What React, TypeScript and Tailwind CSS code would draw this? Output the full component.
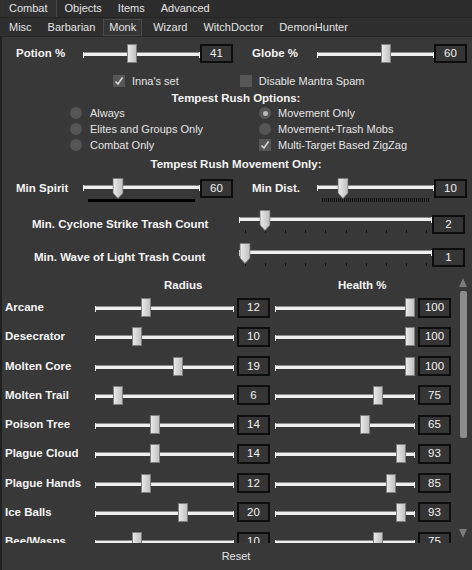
import React from 'react';

type Ticks = 'none' | 'solid' | 'dotted' | 'ten';

type SliderProps = {
  w: string;
  f: number;
  pointer?: boolean;
  ticks?: Ticks;
  inset?: number;
};

const Thumb = ({ pointer }: { pointer?: boolean }) =>
  pointer ? (
    <svg width="11" height="21" viewBox="0 0 11 21" className="block">
      <defs>
        <linearGradient id="pt" x1="0" x2="1" y1="0" y2="0">
          <stop offset="0" stopColor="#ececec" />
          <stop offset="1" stopColor="#bdbdbd" />
        </linearGradient>
      </defs>
      <path d="M0.5 0.5 H10.5 V15 L5.5 20.5 L0.5 15 Z" fill="url(#pt)" stroke="#7d7d7d" />
    </svg>
  ) : (
    <div className="w-[10px] h-[19px] bg-gradient-to-r from-[#e8e8e8] to-[#c2c2c2] border border-[#7e7e7e]" />
  );

const Slider = ({ w, f, pointer, ticks = 'none', inset = 5 }: SliderProps) => (
  <div className={`relative shrink-0 ${w} ${pointer ? 'h-[21px]' : 'h-[19px]'}`}>
    <div
      className={`absolute left-0 right-0 h-[4px] border-t border-[#8a8a8a] bg-[#efefef] ${
        pointer ? 'top-[7px]' : 'top-[8px]'
      }`}
    />
    <div className={`absolute left-0 w-px h-[6px] bg-[#efefef] ${pointer ? 'top-[7px]' : 'top-[8px]'}`} />
    <div className={`absolute right-0 w-px h-[6px] bg-[#efefef] ${pointer ? 'top-[7px]' : 'top-[8px]'}`} />
    {ticks === 'solid' && <div className="absolute left-[5px] right-[5px] top-[21px] h-[3px] bg-black" />}
    {ticks === 'dotted' && (
      <div className="absolute left-[5px] right-[5px] top-[20px] h-[4px] bg-[repeating-linear-gradient(90deg,#111_0px,#111_1px,transparent_1px,transparent_2px)]" />
    )}
    {ticks === 'ten' &&
      Array.from({ length: 10 }).map((_, i) => (
        <div
          key={i}
          className="absolute top-[20px] w-px h-[3px] bg-[#111]"
          style={{ left: `calc(${inset}px + (100% - ${inset * 2}px) * ${i / 9})` }}
        />
      ))}
    <div
      className="absolute top-0 -translate-x-1/2"
      style={{ left: `calc(${inset}px + (100% - ${inset * 2}px) * ${f})` }}
    >
      <Thumb pointer={pointer} />
    </div>
  </div>
);

const ValueBox = ({ v, tall }: { v: number; tall?: boolean }) => (
  <div
    className={`shrink-0 w-[33px] ${tall ? 'h-[20px]' : 'h-[19px]'} border-2 border-[#0d0d0d] bg-[#353535] flex items-center justify-center text-[11.5px] text-[#f2f2f2]`}
  >
    {v}
  </div>
);

const Check = ({ on }: { on?: boolean }) => (
  <div className="w-[12px] h-[12px] bg-[#565656] flex items-center justify-center shrink-0">
    {on && (
      <svg width="10" height="10" viewBox="0 0 10 10">
        <path d="M1.5 5.5 L4 8 L8.5 1.5" fill="none" stroke="#d6d6d6" strokeWidth="1.6" />
      </svg>
    )}
  </div>
);

const Radio = ({ on }: { on?: boolean }) => (
  <div className="w-[12px] h-[12px] rounded-full bg-[#555555] flex items-center justify-center shrink-0">
    {on && <div className="w-[5px] h-[5px] rounded-full bg-[#b9b9b9]" />}
  </div>
);

const rows = [
  { name: 'Arcane', r: 12, h: 100 },
  { name: 'Desecrator', r: 10, h: 100 },
  { name: 'Molten Core', r: 19, h: 100 },
  { name: 'Molten Trail', r: 6, h: 75 },
  { name: 'Poison Tree', r: 14, h: 65 },
  { name: 'Plague Cloud', r: 14, h: 93 },
  { name: 'Plague Hands', r: 12, h: 85 },
  { name: 'Ice Balls', r: 20, h: 93 },
  { name: 'Bee/Wasps', r: 10, h: 75 },
];

const bold = 'font-bold text-[11.5px] text-[#f4f4f4]';

export default function App() {
  return (
    <div className="w-[472px] h-[570px] overflow-hidden bg-[#383838] font-['Liberation_Sans',Arial,sans-serif] text-[11px] text-[#e4e4e4] flex flex-col">
      {/* main tabs */}
      <div className="h-[17px] bg-[#2c2c2c] flex items-stretch pl-px shrink-0">
        <div className="px-[8px] flex items-center border-r border-[#454545] bg-[#303030]">Combat</div>
        <div className="px-[8px] flex items-center">Objects</div>
        <div className="px-[8px] flex items-center">Items</div>
        <div className="px-[8px] flex items-center">Advanced</div>
      </div>
      {/* class tabs */}
      <div className="h-[20px] bg-[#2e2e2e] border-t border-[#242424] border-b border-b-[#262626] flex items-center pl-[1px] shrink-0">
        <div className="px-[8px]">Misc</div>
        <div className="px-[8px]">Barbarian</div>
        <div className="px-[5px] h-[17px] flex items-center border border-[#4a4a4a] bg-[#353535]">Monk</div>
        <div className="px-[8px] ml-[3px]">Wizard</div>
        <div className="px-[8px]">WitchDoctor</div>
        <div className="px-[8px]">DemonHunter</div>
      </div>

      <div className="flex-1 flex flex-col border-l-2 border-[#202020]">
        {/* potion / globe */}
        <div className="mt-[7px] h-[19px] flex items-center pl-[14px]">
          <div className={`${bold} w-[67px]`}>Potion %</div>
          <Slider w="w-[117px]" f={0.41} />
          <ValueBox v={41} />
          <div className={`${bold} w-[65px] ml-[19px]`}>Globe %</div>
          <Slider w="w-[117px]" f={0.6} />
          <ValueBox v={60} />
        </div>

        <div className="mt-[12px] h-[12px] flex items-center">
          <div className="ml-[111px] flex items-center gap-[7px]">
            <Check on />
            <span>Inna's set</span>
          </div>
          <div className="ml-[61px] flex items-center gap-[7px]">
            <Check />
            <span>Disable Mantra Spam</span>
          </div>
        </div>

        <div className={`mt-[6px] h-[12px] flex items-center justify-center pr-[2px] ${bold}`}>Tempest Rush Options:</div>

        <div className="flex">
          <div className="ml-[68px] w-[189px] flex flex-col">
            <div className="h-[16px] flex items-center gap-[8px]"><Radio /><span>Always</span></div>
            <div className="h-[16px] flex items-center gap-[8px]"><Radio /><span>Elites and Groups Only</span></div>
            <div className="h-[16px] flex items-center gap-[8px]"><Radio /><span>Combat Only</span></div>
          </div>
          <div className="flex flex-col">
            <div className="h-[16px] flex items-center gap-[7px]"><Radio on /><span>Movement Only</span></div>
            <div className="h-[16px] flex items-center gap-[7px]"><Radio /><span>Movement+Trash Mobs</span></div>
            <div className="h-[16px] flex items-center gap-[7px]"><Check on /><span>Multi-Target Based ZigZag</span></div>
          </div>
        </div>

        <div className={`mt-[6px] h-[12px] flex items-center justify-center pr-[2px] ${bold}`}>Tempest Rush Movement Only:</div>

        {/* min spirit / min dist */}
        <div className="mt-[8px] h-[19px] flex items-start pl-[14px]">
          <div className={`${bold} w-[67px] h-[19px] flex items-center`}>Min Spirit</div>
          <div className="-mt-px">
            <Slider w="w-[117px]" f={0.28} pointer ticks="solid" />
          </div>
          <ValueBox v={60} />
          <div className={`${bold} w-[65px] ml-[19px] h-[19px] flex items-center`}>Min Dist.</div>
          <div className="-mt-px">
            <Slider w="w-[117px]" f={0.2} pointer ticks="dotted" />
          </div>
          <ValueBox v={10} />
        </div>

        <div className="mt-[17px] h-[19px] flex items-start">
          <div className={`${bold} w-[237px] pl-[30px] h-[19px] flex items-center`}>Min. Cyclone Strike Trash Count</div>
          <div className="-mt-[5px]">
            <Slider w="w-[193px]" f={1 / 9} pointer ticks="ten" inset={6} />
          </div>
          <ValueBox v={2} />
        </div>

        <div className="mt-[14px] h-[19px] flex items-start">
          <div className={`${bold} w-[237px] pl-[32px] h-[19px] flex items-center`}>Min. Wave of Light Trash Count</div>
          <div className="-mt-[5px]">
            <Slider w="w-[193px]" f={0} pointer ticks="ten" inset={6} />
          </div>
          <ValueBox v={1} />
        </div>

        {/* scroll area */}
        <div className="mt-[5px] h-[271px] flex overflow-hidden">
          <div className="w-[456px] flex flex-col">
            <div className="h-[21px] pt-[5px] flex shrink-0">
              <div className={`${bold} w-[270px] pl-[162px]`}>Radius</div>
              <div className={`${bold} pl-[66px]`}>Health %</div>
            </div>
            {rows.map((row) => (
              <div key={row.name} className="h-[29.25px] shrink-0 flex items-center pl-[3px]">
                <div className={`${bold} w-[90px]`}>{row.name}</div>
                <Slider w="w-[139px]" f={(row.r - 2) / 28} />
                <div className="ml-[3px]">
                  <ValueBox v={row.r} tall />
                </div>
                <div className="ml-[5px]">
                  <Slider w="w-[140px]" f={row.h / 100} />
                </div>
                <div className="ml-[3px]">
                  <ValueBox v={row.h} tall />
                </div>
              </div>
            ))}
          </div>
          {/* scrollbar */}
          <div className="w-[8px] ml-[1px] flex flex-col items-center">
            <svg width="8" height="9" viewBox="0 0 8 9" className="mt-[6px]">
              <path d="M4 0 L8 9 H0 Z" fill="#7a7a7a" />
            </svg>
            <div className="mt-[4px] w-[7px] h-[147px] rounded-[2px] bg-[#8c8c8c]" />
            <div className="flex-1" />
            <svg width="8" height="9" viewBox="0 0 8 9" className="mb-[5px]">
              <path d="M0 0 H8 L4 9 Z" fill="#7a7a7a" />
            </svg>
          </div>
        </div>

        <div className="flex-1 flex items-center justify-center pr-[2px]">Reset</div>
      </div>
    </div>
  );
}
